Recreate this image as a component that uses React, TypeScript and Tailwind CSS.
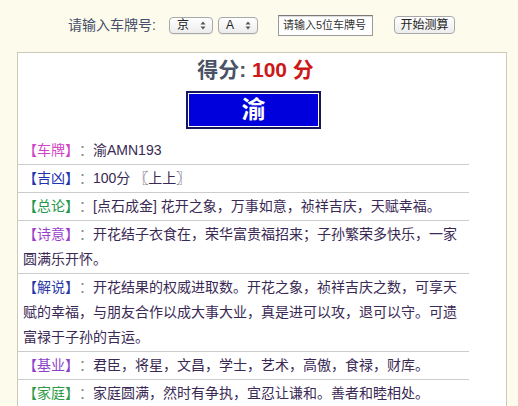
import React from "react";

const CJK = { fontFamily: '"Liberation Sans", "Noto Sans CJK SC", sans-serif' };

function Arrows() {
  return (
    <svg width="6" height="9" viewBox="0 0 6 9" className="shrink-0">
      <path d="M3 0.5 L5.5 3.5 L0.5 3.5 Z" fill="#555" />
      <path d="M3 8.5 L5.5 5.5 L0.5 5.5 Z" fill="#555" />
    </svg>
  );
}

function FakeSelect({ label, w }: { label: string; w: string }) {
  return (
    <div
      className={`${w} h-[17px] flex items-center justify-between pl-[7px] pr-[6px] rounded-[4px] border border-[#a8a8a8] bg-gradient-to-b from-white to-[#ececec] text-[12px] text-[#222] shadow-[0_1px_0_rgba(0,0,0,0.05)]`}
    >
      <span className="leading-[15px]">{label}</span>
      <Arrows />
    </div>
  );
}

type Row = { label: string; color: string; text: string };

const rows: Row[] = [
  { label: "【车牌】", color: "text-[#d044c4]", text: "渝AMN193" },
  { label: "【吉凶】", color: "text-[#2233b0]", text: "100分 〖上上〗" },
  { label: "【总论】", color: "text-[#23964a]", text: "[点石成金] 花开之象，万事如意，祯祥吉庆，天赋幸福。" },
  { label: "【诗意】", color: "text-[#9a3fcc]", text: "开花结子衣食在，荣华富贵福招来；子孙繁荣多快乐，一家圆满乐开怀。" },
  { label: "【解说】", color: "text-[#2a38a8]", text: "开花结果的权威进取数。开花之象，祯祥吉庆之数，可享天赋的幸福，与朋友合作以成大事大业，真是进可以攻，退可以守。可遗富禄于子孙的吉运。" },
  { label: "【基业】", color: "text-[#8d3fcc]", text: "君臣，将星，文昌，学士，艺术，高傲，食禄，财库。" },
  { label: "【家庭】", color: "text-[#2f9a48]", text: "家庭圆满，然时有争执，宜忍让谦和。善者和睦相处。" },
];

export default function App() {
  return (
    <div className="w-[518px] h-[406px] overflow-hidden bg-[#fdfcec] [text-spacing-trim:space-all]" style={CJK}>
      {/* top bar */}
      <div className="h-[52px] flex items-center pl-[68px] pb-[2px]">
        <span className="text-[14px] text-[#454d6a] w-[101px] whitespace-nowrap">请输入车牌号:</span>
        <FakeSelect label="京" w="w-[44px]" />
        <div className="ml-[5px]">
          <FakeSelect label="A" w="w-[40px]" />
        </div>
        <div className="ml-[20px] w-[95px] h-[21px] border border-[#9a9a9a] border-t-[#7a7a7a] bg-white flex items-center pl-[4px] text-[11px] text-[#333] whitespace-nowrap overflow-hidden shadow-[inset_0_1px_1px_rgba(0,0,0,0.15)]">
          请输入5位车牌号
        </div>
        <div className="ml-[21px] w-[61px] h-[18px] rounded-[4px] border border-[#a8a8a8] bg-gradient-to-b from-white to-[#ececec] flex items-center justify-center text-[12px] text-[#222] whitespace-nowrap">
          开始测算
        </div>
      </div>

      {/* main box */}
      <div className="ml-[17px] w-[490px] h-[400px] border border-[#cdc9b6] bg-white">
        <div className="w-[471px] flex flex-col items-center">
          <div className="mt-[4px] text-[21px] leading-[26px] font-bold pl-[4px]">
            <span className="text-[#4a5366]">得分: </span>
            <span className="text-[#cc1818]">100 分</span>
          </div>
          <div className="mt-[8px] w-[135px] h-[38px] bg-[#0000dc] border-2 border-[#16165c] shadow-[inset_0_0_0_1px_#ffffff] flex items-center justify-center text-white text-[24px] font-bold leading-none">
            渝
          </div>
        </div>
        <div className="mt-[8px] w-[451px]">
          {rows.map((r) => (
            <div
              key={r.label}
              className="border-b border-[#cccccc] pl-[5px] pr-[6px] pt-[1px] pb-[1px] text-[14px] leading-[25px] text-[#3a2954]"
            >
              <span className={r.color}>{r.label}</span>
              <span className="text-[#888]">：</span>
              <span>{r.text}</span>
            </div>
          ))}
        </div>
      </div>
    </div>
  );
}
